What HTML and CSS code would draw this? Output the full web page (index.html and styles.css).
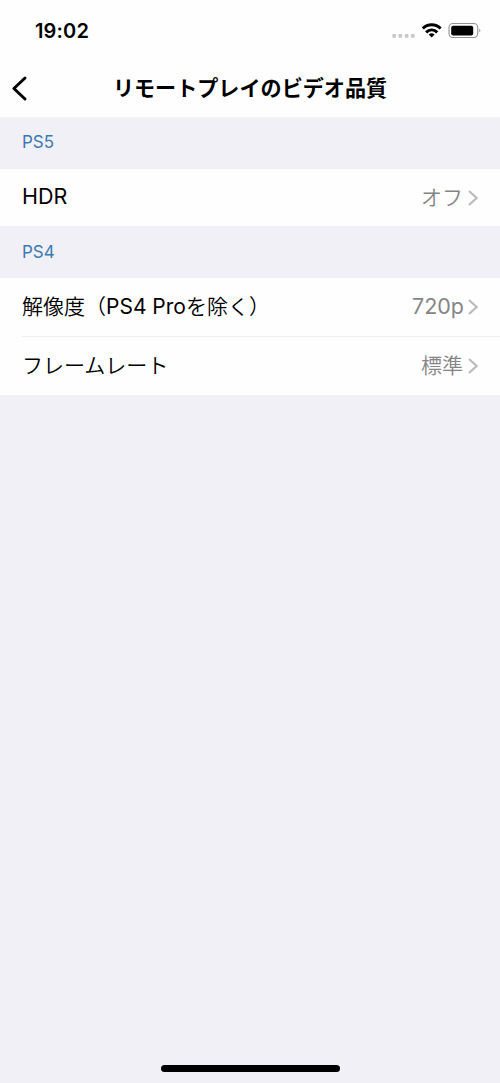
FILE: index.html
```html
<!DOCTYPE html>
<html lang="ja">
<head>
<meta charset="utf-8">
<title>リモートプレイのビデオ品質</title>
<link rel="stylesheet" href="styles.css">
</head>
<body>
<div class="screen">
  <div class="status">
    <span class="time">19:02</span>
    <svg class="status-icons" width="90" height="20" viewBox="0 0 90 20">
      <g fill="#c8c8c9"><rect x="1.3" y="13" width="3.8" height="3.8" rx="1"/><rect x="7.4" y="13" width="3.8" height="3.8" rx="1"/><rect x="13.7" y="13" width="3.8" height="3.8" rx="1"/><rect x="19.9" y="13" width="3.8" height="3.8" rx="1"/></g>
      <g fill="none" stroke="#000" stroke-width="3"><path d="M31.8 7.5C36.9 2.5 44.5 2.5 49.6 7.5"/><path d="M35.1 11.3C38.4 8.1 43 8.1 46.3 11.3"/></g>
      <path d="M37.8 13.5Q40.7 11.1 43.6 13.5L40.7 16.6Z"/>
      <rect x="58" y="2.5" width="28.7" height="14" rx="4" fill="none" stroke="#929292" stroke-width="1.1"/>
      <rect x="60.2" y="4.7" width="22" height="9.8" rx="2"/>
      <path d="M88.3 7.5Q90.3 9.5 88.3 11.5Z" fill="#929292"/>
    </svg>
  </div>
  <header class="nav">
    <svg class="back" width="18" height="28" viewBox="0 0 18 28"><path d="M14 3L2.9 13.5L14 24" fill="none" stroke="#000" stroke-width="3" stroke-linecap="round" stroke-linejoin="round"/></svg>
    <h1 class="title">リモートプレイのビデオ品質</h1>
  </header>
  <h2 class="section">PS5</h2>
  <div class="group">
    <div class="row"><span class="label latin">HDR</span><span class="value">オフ</span><svg class="chevron" width="10" height="18" viewBox="0 0 10 18"><path d="M1 2L8.7 9L1 16"/></svg></div>
  </div>
  <h2 class="section second">PS4</h2>
  <div class="group">
    <div class="row resolution"><span class="label">解像度（<span class="latin">PS4 Pro</span>を除く）</span><span class="value latin">720p</span><svg class="chevron" width="10" height="18" viewBox="0 0 10 18"><path d="M1 2L8.7 9L1 16"/></svg></div>
    <div class="row divided"><span class="label">フレームレート</span><span class="value">標準</span><svg class="chevron" width="10" height="18" viewBox="0 0 10 18"><path d="M1 2L8.7 9L1 16"/></svg></div>
  </div>
  <div class="home"></div>
</div>
</body>
</html>
```
FILE: styles.css
```css
* { box-sizing: border-box; }
body { margin: 0; font-family: Inter, "Noto Sans CJK JP", sans-serif; color: #000; }
.screen { height: 1083px; display: flex; flex-direction: column; background: #f0f0f6; }
.status { height: 60px; flex: none; background: #fefefe; display: flex; justify-content: space-between; align-items: center; padding: 1px 19px 0 35px; }
.time { font-size: 20px; font-weight: 600; letter-spacing: .15px; }
.nav { height: 57px; flex: none; background: #fefefe; display: grid; grid-template-columns: 28px 1fr 28px; align-items: center; }
.back { margin-left: 11px; }
.title { margin: 0; padding-bottom: 3px; text-align: center; font-size: 21.1px; font-weight: 600; white-space: nowrap; }
.section { margin: 0; height: 52px; flex: none; padding: 0 22px; font-size: 17px; font-weight: 400; line-height: 51px; color: #3a7ab5; }
.second { line-height: 53px; }
.group { background: #fefefe; flex: none; padding-left: 22px; }
.row { height: 57px; padding-right: 22px; display: flex; align-items: center; font-size: 21px; }
.resolution { height: 58px; }
.divided { height: 59px; border-top: 1px solid #efeff1; }
.label, .value { padding-bottom: 4px; font-weight: 350; }
.value { margin-left: auto; color: #858588; }
.latin { font-weight: 400; }
.row > .latin { padding-bottom: 3px; font-size: 21.5px; }
.value.latin { margin-right: -1px; }
.chevron { margin-left: 5px; fill: none; stroke: #bababc; stroke-width: 2.2; }
.home { width: 179px; height: 7px; flex: none; margin: auto auto 11px; border-radius: 3.5px; background: #000; }
```
